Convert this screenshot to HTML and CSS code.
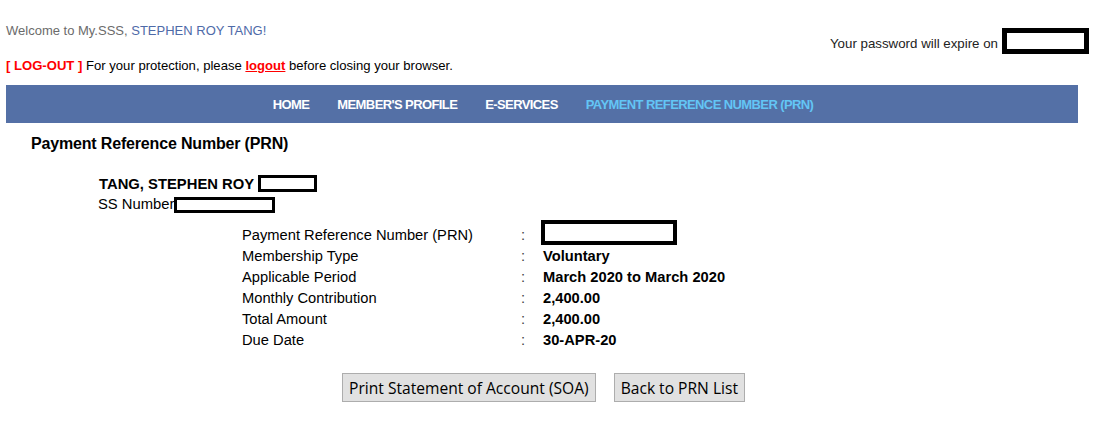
FILE: index.html
```html
<!DOCTYPE html>
<html>
<head>
<meta charset="utf-8">
<link rel="stylesheet" href="styles.css">
</head>
<body>
<div class="page">
  <div class="header">
    <div class="header-left">
      <div class="welcome">Welcome to My.SSS, <span class="welcome-name">STEPHEN ROY TANG!</span></div>
      <div class="logout-line"><span class="logout-tag">[ LOG-OUT ]</span> For your protection, please <a class="logout-link" href="#">logout</a> before closing your browser.</div>
    </div>
    <div class="header-right">
      <span class="expire">Your password will expire on</span>
      <span class="redact redact-expire"></span>
    </div>
  </div>
  <nav class="nav">
    <a class="nav-item" href="#">HOME</a>
    <a class="nav-item" href="#">MEMBER'S PROFILE</a>
    <a class="nav-item" href="#">E-SERVICES</a>
    <a class="nav-item active" href="#">PAYMENT REFERENCE NUMBER (PRN)</a>
  </nav>
  <h1 class="title">Payment Reference Number (PRN)</h1>
  <div class="member">
    <div class="member-name">TANG, STEPHEN ROY <span class="redact redact-name"></span></div>
    <div class="member-ss">SS Number<span class="redact redact-ss"></span></div>
  </div>
  <div class="details">
    <div class="label">Payment Reference Number (PRN)</div><div class="colon">:</div><div class="value"><span class="redact redact-prn"></span></div>
    <div class="label">Membership Type</div><div class="colon">:</div><div class="value">Voluntary</div>
    <div class="label">Applicable Period</div><div class="colon">:</div><div class="value">March 2020 to March 2020</div>
    <div class="label">Monthly Contribution</div><div class="colon">:</div><div class="value">2,400.00</div>
    <div class="label">Total Amount</div><div class="colon">:</div><div class="value">2,400.00</div>
    <div class="label">Due Date</div><div class="colon">:</div><div class="value">30-APR-20</div>
  </div>
  <div class="actions">
    <button class="btn">Print Statement of Account (SOA)</button>
    <button class="btn">Back to PRN List</button>
  </div>
</div>
</body>
</html>
```
FILE: styles.css
```css
html, body {
  margin: 0;
  padding: 0;
  background: #fff;
}
body {
  font-family: "Liberation Sans", Arial, sans-serif;
  color: #000;
}
.page {
  width: 1110px;
  padding: 0 32px 0 6px;
  box-sizing: border-box;
}
.header {
  display: flex;
  justify-content: space-between;
  align-items: flex-start;
  height: 85px;
}
.header-left {
  padding-top: 23px;
  font-size: 13px;
}
.welcome {
  color: #6b6b6b;
  line-height: 15px;
}
.welcome-name {
  color: #4e6aa8;
}
.logout-line {
  margin-top: 20px;
  line-height: 15px;
  font-size: 13.1px;
}
.logout-tag {
  color: #ff0000;
  font-weight: bold;
}
.logout-link {
  color: #ff0000;
  font-weight: bold;
  text-decoration: underline;
}
.header-right {
  display: flex;
  align-items: center;
  padding-top: 28px;
  margin-right: -11px;
  font-size: 13.3px;
  color: #222;
}
.expire {
  margin-right: 4px;
  margin-top: 5px;
}
.redact {
  display: inline-block;
  box-sizing: border-box;
  border: 4px solid #000;
  background: #fff;
  vertical-align: middle;
}
.redact-expire {
  width: 87px;
  height: 26px;
  border-width: 5px;
}
.nav {
  display: flex;
  justify-content: center;
  align-items: center;
  gap: 28px;
  height: 38px;
  background: #5470a6;
  padding-left: 2px;
}
.nav-item {
  color: #fff;
  text-decoration: none;
  font-weight: bold;
  font-size: 13px;
  letter-spacing: -0.6px;
  padding-top: 1px;
}
.nav-item.active {
  color: #63c5f5;
}
.title {
  margin: 12px 0 0 25px;
  font-size: 16px;
  letter-spacing: -0.17px;
  line-height: 18px;
  font-weight: bold;
  color: #000;
}
.member {
  margin: 21px 0 0 92px;
  font-size: 14.8px;
}
.member-name {
  font-weight: bold;
  line-height: 20px;
  display: flex;
  align-items: center;
  gap: 4px;
  margin-left: 1px;
}
.redact-name {
  width: 59px;
  height: 17px;
  border-width: 3px;
  margin-top: -2px;
}
.member-ss {
  line-height: 20px;
  display: flex;
  align-items: center;
}
.redact-ss {
  width: 101px;
  height: 16px;
  border-width: 3px;
  margin-top: 2px;
}
.details {
  display: grid;
  grid-template-columns: 279px 22px auto;
  margin: 11px 0 0 236px;
  font-size: 14.7px;
  line-height: 21px;
}
.colon {
  color: #444;
}
.value {
  font-weight: bold;
}
.redact-prn {
  width: 136px;
  height: 25px;
  border-width: 4px;
  margin-top: -5px;
  margin-left: -2px;
  vertical-align: top;
}
.actions {
  display: flex;
  justify-content: center;
  gap: 18px;
  margin-top: 22px;
  padding-left: 3px;
}
.btn {
  font-family: "Open Sans", "Noto Sans", sans-serif;
  font-size: 15.6px;
  height: 29px;
  padding: 0 6px;
  background: #e1e1e1;
  border: 1px solid #adadad;
  border-radius: 0;
  color: #000;
}
```
